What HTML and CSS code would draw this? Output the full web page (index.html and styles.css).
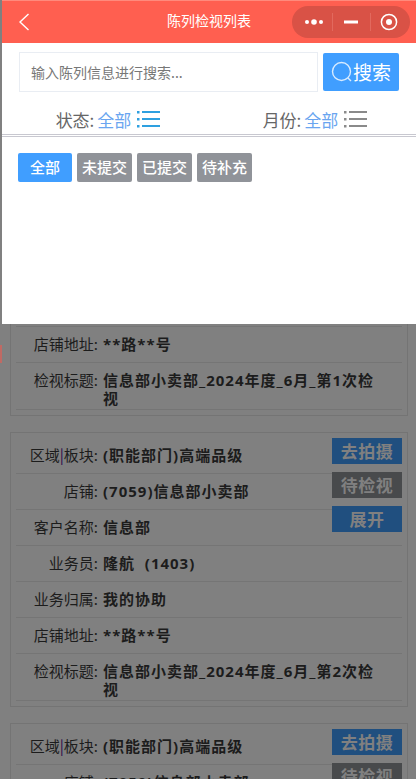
FILE: index.html
```html
<!DOCTYPE html>
<html lang="zh-CN">
<head>
    <meta charset="UTF-8">
    <meta name="viewport" content="width=device-width, initial-scale=1.0">
    <title>陈列检视列表</title>
    <link rel="stylesheet" href="styles.css">
</head>
<body>

    <!-- Filter panel -->
    <div class="panel">
        <header class="navbar">
            <svg class="back" width="11" height="18" viewBox="0 0 11 18"><path d="M9.5 1 1 9l8.5 8" fill="none" stroke="#fff" stroke-width="1.4"/></svg>
            <div class="nav-title">陈列检视列表</div>
            <div class="capsule">
                <svg class="capsule-dots" width="18" height="6" viewBox="0 0 18 6"><circle cx="2" cy="3" r="2" fill="#fff"/><circle cx="9" cy="3" r="2.8" fill="#fff"/><circle cx="16" cy="3" r="2" fill="#fff"/></svg>
                <span class="capsule-line"></span>
                <svg class="capsule-dash" width="14" height="4" viewBox="0 0 14 4"><rect y="0.5" width="14" height="3" fill="#fff"/></svg>
                <span class="capsule-line"></span>
                <svg class="capsule-dot" width="18" height="18" viewBox="0 0 18 18"><circle cx="9" cy="9" r="7.6" fill="none" stroke="#fff" stroke-width="1.5"/><circle cx="9" cy="9" r="3" fill="#fff"/></svg>
            </div>
        </header>

        <div class="search-row">
            <div class="search-input">输入陈列信息进行搜索...</div>
            <div class="search-button">
                <svg width="22" height="22" viewBox="0 0 22 22"><circle cx="10.5" cy="10.5" r="9" fill="none" stroke="#d8ebff" stroke-width="1.4"/><path d="m17 17 3 3" stroke="#d8ebff" stroke-width="1.4"/></svg>
                <span>搜索</span>
            </div>
        </div>

        <div class="filter-row">
            <div class="filter">
                <span class="filter-label">状态:</span><span class="filter-value">全部</span>
                <svg class="filter-icon" width="23" height="18" viewBox="0 0 23 18"><g fill="#2ea0e0"><rect y="1" width="2.5" height="2.5"/><rect y="8" width="2.5" height="2.5"/><rect y="15" width="2.5" height="2.5"/><rect x="5" y="1" width="18" height="2"/><rect x="5" y="8" width="18" height="2"/><rect x="5" y="15" width="18" height="2"/></g></svg>
            </div>
            <div class="filter">
                <span class="filter-label">月份:</span><span class="filter-value">全部</span>
                <svg class="filter-icon" width="23" height="18" viewBox="0 0 23 18"><g fill="#8a8a8a"><rect y="1" width="2.5" height="2.5"/><rect y="8" width="2.5" height="2.5"/><rect y="15" width="2.5" height="2.5"/><rect x="5" y="1" width="18" height="2"/><rect x="5" y="8" width="18" height="2"/><rect x="5" y="15" width="18" height="2"/></g></svg>
            </div>
        </div>

        <div class="tabs">
            <span class="tab tab-active">全部</span>
            <span class="tab">未提交</span>
            <span class="tab">已提交</span>
            <span class="tab">待补充</span>
        </div>
    </div>

    <!-- List behind the mask -->
    <div class="list">
        <div class="edge-mark"></div>

        <div class="card card-cut">
            <div class="row"><div class="label">店铺地址:</div><div class="value">**路**号</div></div>
            <div class="row"><div class="label">检视标题:</div><div class="value">信息部小卖部_2024年度_6月_第1次检视</div></div>
        </div>

        <div class="card">
            <div class="actions">
                <span class="action action-blue">去拍摄</span>
                <span class="action action-gray">待检视</span>
                <span class="action action-blue">展开</span>
            </div>
            <div class="row"><div class="label">区域<span class="pipe">|</span>板块:</div><div class="value">(职能部门)高端品级</div></div>
            <div class="row"><div class="label">店铺:</div><div class="value">(7059)信息部小卖部</div></div>
            <div class="row"><div class="label">客户名称:</div><div class="value">信息部</div></div>
            <div class="row"><div class="label">业务员:</div><div class="value">隆航&nbsp;&nbsp;(1403)</div></div>
            <div class="row"><div class="label">业务归属:</div><div class="value">我的协助</div></div>
            <div class="row"><div class="label">店铺地址:</div><div class="value">**路**号</div></div>
            <div class="row"><div class="label">检视标题:</div><div class="value">信息部小卖部_2024年度_6月_第2次检视</div></div>
        </div>

        <div class="card">
            <div class="actions">
                <span class="action action-blue">去拍摄</span>
                <span class="action action-gray">待检视</span>
            </div>
            <div class="row"><div class="label">区域<span class="pipe">|</span>板块:</div><div class="value">(职能部门)高端品级</div></div>
            <div class="row"><div class="label">店铺:</div><div class="value">(7059)信息部小卖部</div></div>
        </div>
    </div>

</body>
</html>
```

FILE: styles.css
```css
html, body {
    margin: 0;
    padding: 0;
}

body {
    width: 416px;
    height: 779px;
    overflow: hidden;
    font-family: "Noto Sans CJK SC", "Open Sans", sans-serif;
    background-color: #808080;
}

.panel {
    box-sizing: border-box;
    height: 324px;
    margin-left: 2px;
    background-color: #fff;
}

.navbar {
    position: relative;
    box-sizing: border-box;
    height: 43px;
    border-top: 1px solid #ff8a7c;
    background-color: #ff5f50;
    display: flex;
    align-items: center;
}

.back {
    margin-left: 17px;
}

.nav-title {
    position: absolute;
    left: 0;
    right: 0;
    top: 9px;
    text-align: center;
    font-size: 14px;
    line-height: 20px;
    color: #fff;
}

.capsule {
    margin-left: auto;
    margin-right: 6px;
    width: 118px;
    height: 32px;
    border-radius: 16px;
    background-color: #d95246;
    display: flex;
    align-items: center;
    box-sizing: border-box;
    padding-left: 13px;
}

.capsule-line {
    width: 1px;
    height: 18px;
    background-color: #e2695e;
}

.capsule-dots {
    margin-right: 9px;
}

.capsule-dash {
    margin: 0 12px 0 11px;
}

.capsule-dot {
    margin-left: 9px;
}

.search-row {
    display: flex;
    gap: 5px;
    padding: 9px 17px 0 17px;
}

.search-input {
    box-sizing: border-box;
    width: 299px;
    height: 40px;
    padding-left: 11px;
    border: 1px solid #e9edf3;
    font-size: 14px;
    line-height: 38px;
    color: #777;
}

.search-button {
    box-sizing: border-box;
    width: 76px;
    height: 38px;
    margin-top: 1px;
    border-radius: 2px;
    background-color: #409eff;
    color: #fff;
    font-size: 19px;
    line-height: 38px;
    display: flex;
    align-items: center;
    justify-content: center;
}

.filter-row {
    box-sizing: border-box;
    display: flex;
    height: 43px;
    padding-top: 12px;
    border-bottom: 1px solid #c8c8d0;
    box-shadow: 0 1px 0 #fff, 0 2px 0 #c8c8d0;
}

.filter {
    flex: 0 0 50%;
    padding-left: 5px;
    box-sizing: border-box;
    display: flex;
    align-items: center;
    justify-content: center;
    font-size: 17px;
}

.filter-label {
    color: #666;
}

.filter-value {
    color: #6aa5f0;
    margin-left: 3px;
}

.filter-icon {
    margin-left: 6px;
}

.tabs {
    display: flex;
    gap: 5px;
    padding: 18px 16px 0 16px;
}

.tab {
    box-sizing: border-box;
    width: 55px;
    height: 29px;
    border-radius: 2px;
    background-color: #909399;
    color: #fff;
    font-size: 15px;
    font-weight: 500;
    line-height: 28px;
    text-align: center;
}

.tab-active {
    width: 54px;
    background-color: #409eff;
}

.list {
    padding: 0 8px 0 10px;
}

.edge-mark {
    position: absolute;
    left: 0;
    top: 345px;
    width: 2px;
    height: 18px;
    background-color: #c06a64;
}

.card {
    position: relative;
    box-sizing: border-box;
    margin-bottom: 16px;
    padding: 5px;
    border: 1px solid #747474;
}

.card-cut {
    border-top: 0;
    padding-top: 2px;
}

.row {
    display: flex;
    box-sizing: border-box;
    min-height: 36px;
    padding: 8px 0 2px 0;
    border-bottom: 1px solid #757575;
    font-size: 15px;
    line-height: 18px;
    color: #1c1c1c;
}

.card-cut .row:first-child {
    border-top: 1px solid #757575;
    min-height: 37px;
}

.label {
    flex: 0 0 82px;
    box-sizing: border-box;
    text-align: right;
}

.pipe {
    color: #2a0a4a;
}

.value {
    flex: 1;
    padding: 0 19px 0 5px;
    font-weight: 700;
    font-family: "Open Sans", "Noto Sans CJK SC", sans-serif;
    letter-spacing: 1px;
}

.actions {
    position: absolute;
    top: 5px;
    right: 5px;
    display: flex;
    flex-direction: column;
    gap: 8px;
}

.action {
    width: 70px;
    height: 26px;
    font-size: 17px;
    font-weight: 700;
    line-height: 25px;
    text-align: center;
    color: #808080;
    letter-spacing: 0.5px;
}

.action-blue {
    background-color: #204f7f;
}

.action-gray {
    background-color: #484a4c;
}
```
